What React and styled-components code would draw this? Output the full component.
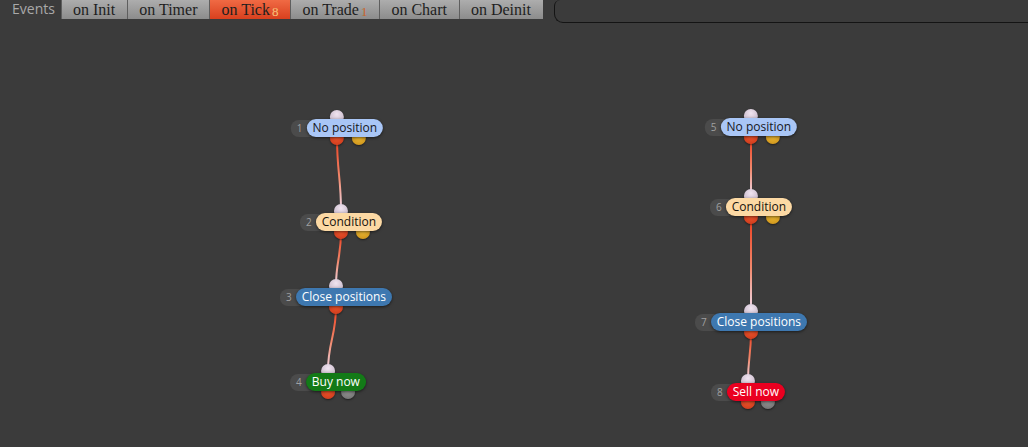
import React from 'react';
import styled, { createGlobalStyle } from 'styled-components';

const HEADER = 24;

const Global = createGlobalStyle`
    html, body {
        margin: 0;
        padding: 0;
        background: #3b3b3b;
        overflow: hidden;
    }
`;

const Page = styled.div`
    width: 1028px;
    height: 447px;
    display: flex;
    flex-direction: column;
    background: #3b3b3b;
`;

const Header = styled.div`
    height: ${HEADER}px;
    display: flex;
    align-items: flex-start;
    flex-shrink: 0;
`;

const EventsLabel = styled.div`
    width: 49px;
    font-family: "Open Sans", sans-serif;
    font-size: 14px;
    color: #a9a9a9;
    padding: 0 0 0 12px;
    line-height: 18px;
`;

const Tabs = styled.div`
    display: flex;
    height: 19px;
`;

const Tab = styled.div`
    display: flex;
    align-items: flex-start;
    height: 19px;
    padding: 0 12px 0 11px;
    font-family: "Liberation Serif", serif;
    font-size: 16px;
    line-height: 19px;
    color: #1e1e1e;
    white-space: nowrap;
    border-left: 1px solid #5e5e5e;
    background: ${p => p.$active
        ? 'linear-gradient(#f06a44, #d8401e)'
        : 'linear-gradient(#adadad, #8c8c8c)'};
`;

const Count = styled.span`
    font-size: 13px;
    line-height: 13px;
    margin: 5px 0 0 2px;
    color: ${p => p.$active ? '#f8c47a' : '#c8642a'};
`;

const Corner = styled.div`
    flex: 1;
    height: 22px;
    margin-left: 11px;
    border-left: 1px solid #141414;
    border-bottom: 1px solid #141414;
    border-bottom-left-radius: 9px;
    border-top-left-radius: 6px;
`;

const Canvas = styled.div`
    position: relative;
    flex: 1;
`;

const Wires = styled.svg`
    position: absolute;
    left: 0;
    top: 0;
    width: 100%;
    height: 100%;
`;

const Node = styled.div`
    position: absolute;
    transform: translate(-50%, -50%);
    display: flex;
    align-items: center;
`;

const PORT = {
    in: 'radial-gradient(circle at 50% 30%, #f0e4f0, #b9a9bc)',
    red: 'radial-gradient(circle at 50% 35%, #f25a2e, #c8361a)',
    yellow: 'radial-gradient(circle at 50% 35%, #f0be38, #c98e16)',
    gray: 'radial-gradient(circle at 50% 35%, #9a9a9a, #6c6c6c)',
};

const Port = styled.div`
    position: absolute;
    width: 14px;
    height: 14px;
    border-radius: 50%;
    top: ${p => p.$top}px;
    left: calc(50% + ${p => p.$dx - 7}px);
    background: ${p => PORT[p.$kind]};
    box-shadow: 0 1px 2px rgba(0, 0, 0, 0.5);
`;

const Badge = styled.div`
    position: relative;
    height: 17px;
    padding: 0 14px 0 6px;
    border-radius: 8px 0 0 8px;
    background: #4b4b4b;
    font-family: "Open Sans", sans-serif;
    font-size: 10px;
    line-height: 17px;
    color: #a0a0a0;
`;

const THEMES = {
    idle: { bg: '#a9c6f6', fg: '#15171c' },
    cond: { bg: '#fcd9a4', fg: '#15120c' },
    close: { bg: '#3e78b0', fg: '#ffffff' },
    buy: { bg: '#137a17', fg: '#ffffff' },
    sell: { bg: '#ea0020', fg: '#ffffff' },
};

const Pill = styled.div`
    position: relative;
    margin-left: -10px;
    height: 18px;
    padding: 0 6px;
    border-radius: 9px;
    background: ${p => THEMES[p.$kind].bg};
    color: ${p => THEMES[p.$kind].fg};
    font-family: "Open Sans", sans-serif;
    font-size: 12px;
    line-height: 18px;
    white-space: nowrap;
    box-shadow: 0 1px 3px rgba(0, 0, 0, 0.55);
`;

const tabs = [
    { name: 'on Init' },
    { name: 'on Timer' },
    { name: 'on Tick', count: 8, active: true },
    { name: 'on Trade', count: 1 },
    { name: 'on Chart' },
    { name: 'on Deinit' },
];

const nodes = [
    { n: 1, x: 337, y: 128, label: 'No position', kind: 'idle', alt: 'yellow' },
    { n: 2, x: 341, y: 222, label: 'Condition', kind: 'cond', alt: 'yellow' },
    { n: 3, x: 336, y: 297, label: 'Close positions', kind: 'close' },
    { n: 4, x: 328, y: 382, label: 'Buy now', kind: 'buy', alt: 'gray' },
    { n: 5, x: 751, y: 127, label: 'No position', kind: 'idle', alt: 'yellow' },
    { n: 6, x: 751, y: 207, label: 'Condition', kind: 'cond', alt: 'yellow' },
    { n: 7, x: 751, y: 322, label: 'Close positions', kind: 'close' },
    { n: 8, x: 748, y: 392, label: 'Sell now', kind: 'sell', alt: 'gray' },
];

const links = [[1, 2], [2, 3], [3, 4], [5, 6], [6, 7], [7, 8]];

const byNum = n => nodes.find(d => d.n === n);

function Wire({ from, to, id }) {
    const x1 = from.x, y1 = from.y + 10 - HEADER;
    const x2 = to.x, y2 = to.y - 11 - HEADER;
    const dy = (y2 - y1) * 0.45;
    return (
        <>
            <defs>
                <linearGradient id={id} gradientUnits="userSpaceOnUse" x1={x1} y1={y1} x2={x2} y2={y2}>
                    <stop offset="0" stopColor="#ee3c1c" />
                    <stop offset="0.55" stopColor="#f28a6e" />
                    <stop offset="1" stopColor="#eedcee" />
                </linearGradient>
            </defs>
            <path
                d={`M${x1} ${y1} C${x1} ${y1 + dy}, ${x2} ${y2 - dy}, ${x2} ${y2}`}
                stroke={`url(#${id})`}
                strokeWidth="2"
                fill="none"
            />
        </>
    );
}

export default function App() {
    return (
        <Page>
            <Global />
            <Header>
                <EventsLabel>Events</EventsLabel>
                <Tabs>
                    {tabs.map(t => (
                        <Tab key={t.name} $active={t.active}>
                            {t.name}
                            {t.count && <Count $active={t.active}>{t.count}</Count>}
                        </Tab>
                    ))}
                </Tabs>
                <Corner />
            </Header>
            <Canvas>
                <Wires>
                    {links.map(([a, b]) => (
                        <Wire key={a} id={`w${a}`} from={byNum(a)} to={byNum(b)} />
                    ))}
                </Wires>
                {nodes.map(d => (
                    <Node key={d.n} style={{ left: d.x, top: d.y - HEADER }}>
                        <Port $kind="in" $top={-9} $dx={0} />
                        <Port $kind="red" $top={12} $dx={0} />
                        {d.alt && <Port $kind={d.alt} $top={12} $dx={d.alt === 'gray' ? 20 : 22} />}
                        <Badge>{d.n}</Badge>
                        <Pill $kind={d.kind}>{d.label}</Pill>
                    </Node>
                ))}
            </Canvas>
        </Page>
    );
}
